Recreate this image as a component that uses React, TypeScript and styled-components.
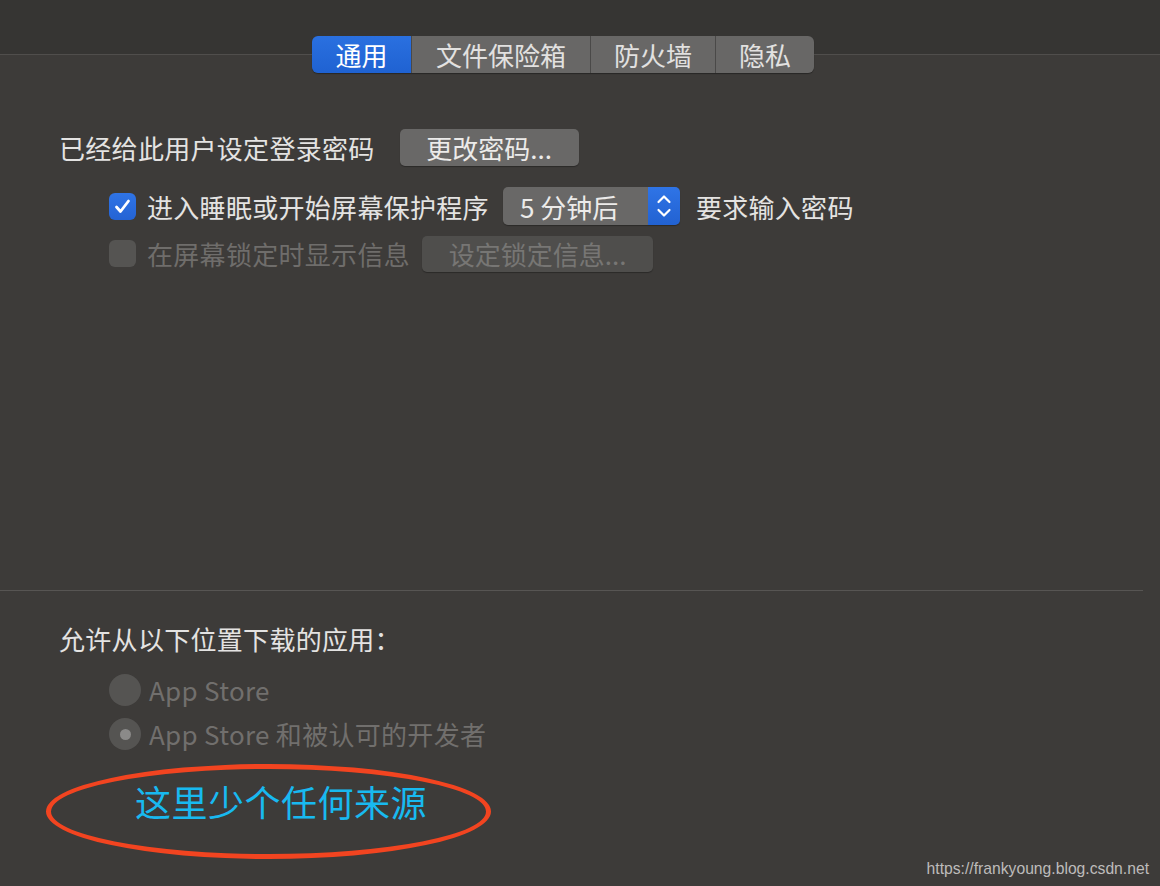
import React from "react";
import styled, { createGlobalStyle } from "styled-components";

const Global = createGlobalStyle`
  html, body {
    margin: 0;
    padding: 0;
    background: #3d3b39;
  }
  * {
    box-sizing: border-box;
  }
`;

const Window = styled.div`
  position: relative;
  width: 1160px;
  height: 886px;
  overflow: hidden;
  background: #3d3b39;
  font-family: "Noto Sans CJK SC", "Noto Sans", sans-serif;
  color: #e4e3e2;
`;

const Header = styled.div`
  height: 55px;
  background: #363533;
  border-bottom: 1px solid #504e4c;
  display: flex;
  align-items: flex-end;
  padding-left: 312px;
`;

const Tabs = styled.div`
  display: flex;
  height: 37px;
  margin-bottom: -19px;
  border-radius: 6px;
  overflow: hidden;
  box-shadow: 0 1px 1px rgba(0, 0, 0, 0.35);
`;

const Tab = styled.div<{ $active?: boolean; $w: number }>`
  width: ${(p) => p.$w}px;
  display: flex;
  align-items: center;
  justify-content: center;
  font-size: 26px;
  color: ${(p) => (p.$active ? "#ffffff" : "#e2e1e0")};
  background: ${(p) =>
    p.$active ? "linear-gradient(#2a70e0, #1f62d2)" : "#686766"};
  & + & {
    border-left: 1px solid #4a4948;
  }
`;

const Body = styled.div`
  padding: 74px 0 0 59px;
  height: 536px;
  border-bottom: 1px solid #575553;
  width: 1143px;
`;

const Row = styled.div<{ $indent?: number; $top?: number }>`
  display: flex;
  align-items: center;
  margin-left: ${(p) => p.$indent ?? 0}px;
  margin-top: ${(p) => p.$top ?? 0}px;
`;

const Label = styled.span<{ $dim?: boolean }>`
  font-size: 26px;
  letter-spacing: 0.3px;
  line-height: 37px;
  color: ${(p) => (p.$dim ? "#6f6d6b" : "#e4e3e2")};
  white-space: nowrap;
`;

const Button = styled.div<{ $dim?: boolean; $w: number; $h?: number }>`
  width: ${(p) => p.$w}px;
  height: ${(p) => p.$h ?? 37}px;
  border-radius: 5px;
  background: ${(p) => (p.$dim ? "#4f4e4c" : "#696867")};
  color: ${(p) => (p.$dim ? "#777674" : "#ecebea")};
  font-size: 26px;
  display: flex;
  align-items: center;
  justify-content: center;
  box-shadow: 0 1px 1px rgba(0, 0, 0, 0.3);
`;

const Check = styled.div<{ $on?: boolean }>`
  width: 27px;
  height: 27px;
  border-radius: 6px;
  background: ${(p) => (p.$on ? "linear-gradient(#2f74e6, #2463d4)" : "#555452")};
  display: flex;
  align-items: center;
  justify-content: center;
  margin-right: 11px;
`;

const Popup = styled.div`
  display: flex;
  width: 177px;
  height: 38px;
  border-radius: 5px;
  overflow: hidden;
  margin: 0 16px 0 14px;
  box-shadow: 0 1px 1px rgba(0, 0, 0, 0.3);
`;

const PopupText = styled.div`
  flex: 1;
  background: #696867;
  color: #ecebea;
  font-size: 26px;
  display: flex;
  align-items: center;
  padding-left: 17px;
`;

const PopupArrows = styled.div`
  width: 32px;
  background: linear-gradient(#2f74e6, #2262d2);
  display: flex;
  align-items: center;
  justify-content: center;
`;

const Lower = styled.div`
  padding: 29px 0 0 59px;
`;

const Radio = styled.div<{ $dot?: boolean }>`
  width: 32px;
  height: 32px;
  border-radius: 50%;
  background: #555452;
  display: flex;
  align-items: center;
  justify-content: center;
  margin-right: 8px;
  &::after {
    content: "";
    display: ${(p) => (p.$dot ? "block" : "none")};
    width: 11px;
    height: 11px;
    border-radius: 50%;
    background: #8b8a89;
  }
`;

const RadioLabel = styled.span`
  font-size: 26px;
  letter-spacing: 0.3px;
  line-height: 44px;
  color: #716f6d;
`;

const Ellipse = styled.div`
  margin: 8px 0 0 46px;
  width: 445px;
  height: 95px;
  border: 5px solid #f24420;
  border-radius: 50%;
  display: flex;
  align-items: flex-start;
  padding: 7px 0 0 84px;
`;

const Note = styled.span`
  font-size: 36px;
  line-height: 50px;
  color: #18b9f0;
  letter-spacing: 0.5px;
`;

const Watermark = styled.div`
  position: absolute;
  right: 11px;
  bottom: 8px;
  font-family: "Liberation Sans", Arial, sans-serif;
  font-size: 15.7px;
  color: #bdbcbb;
`;

const Chevrons = () => (
  <svg width="18" height="28" viewBox="0 0 18 28">
    <path
      d="M3.5 10 L9 4.5 L14.5 10 M3.5 18 L9 23.5 L14.5 18"
      fill="none"
      stroke="#fff"
      strokeWidth="2.2"
      strokeLinecap="round"
      strokeLinejoin="round"
    />
  </svg>
);

const Tick = () => (
  <svg width="19" height="19" viewBox="0 0 19 19">
    <path
      d="M3.5 10 L7.5 14.5 L15.5 4"
      fill="none"
      stroke="#fff"
      strokeWidth="2.8"
      strokeLinecap="round"
      strokeLinejoin="round"
    />
  </svg>
);

export default function App() {
  return (
    <Window>
      <Global />
      <Header>
        <Tabs>
          <Tab $active $w={99}>通用</Tab>
          <Tab $w={179}>文件保险箱</Tab>
          <Tab $w={125}>防火墙</Tab>
          <Tab $w={99}>隐私</Tab>
        </Tabs>
      </Header>
      <Body>
        <Row>
          <Label>已经给此用户设定登录密码</Label>
          <Button $w={179} style={{ marginLeft: 25 }}>更改密码...</Button>
        </Row>
        <Row $indent={50} $top={21}>
          <Check $on>
            <Tick />
          </Check>
          <Label>进入睡眠或开始屏幕保护程序</Label>
          <Popup>
            <PopupText>5 分钟后</PopupText>
            <PopupArrows>
              <Chevrons />
            </PopupArrows>
          </Popup>
          <Label>要求输入密码</Label>
        </Row>
        <Row $indent={50} $top={10}>
          <Check />
          <Label $dim>在屏幕锁定时显示信息</Label>
          <Button $dim $w={231} $h={36} style={{ marginLeft: 12 }}>
            设定锁定信息...
          </Button>
        </Row>
      </Body>
      <Lower>
        <Label>允许从以下位置下载的应用：</Label>
        <Row $indent={50} $top={11}>
          <Radio />
          <RadioLabel>App Store</RadioLabel>
        </Row>
        <Row $indent={50}>
          <Radio $dot />
          <RadioLabel>App Store 和被认可的开发者</RadioLabel>
        </Row>
      </Lower>
      <Ellipse>
        <Note>这里少个任何来源</Note>
      </Ellipse>
      <Watermark>https://frankyoung.blog.csdn.net</Watermark>
    </Window>
  );
}
